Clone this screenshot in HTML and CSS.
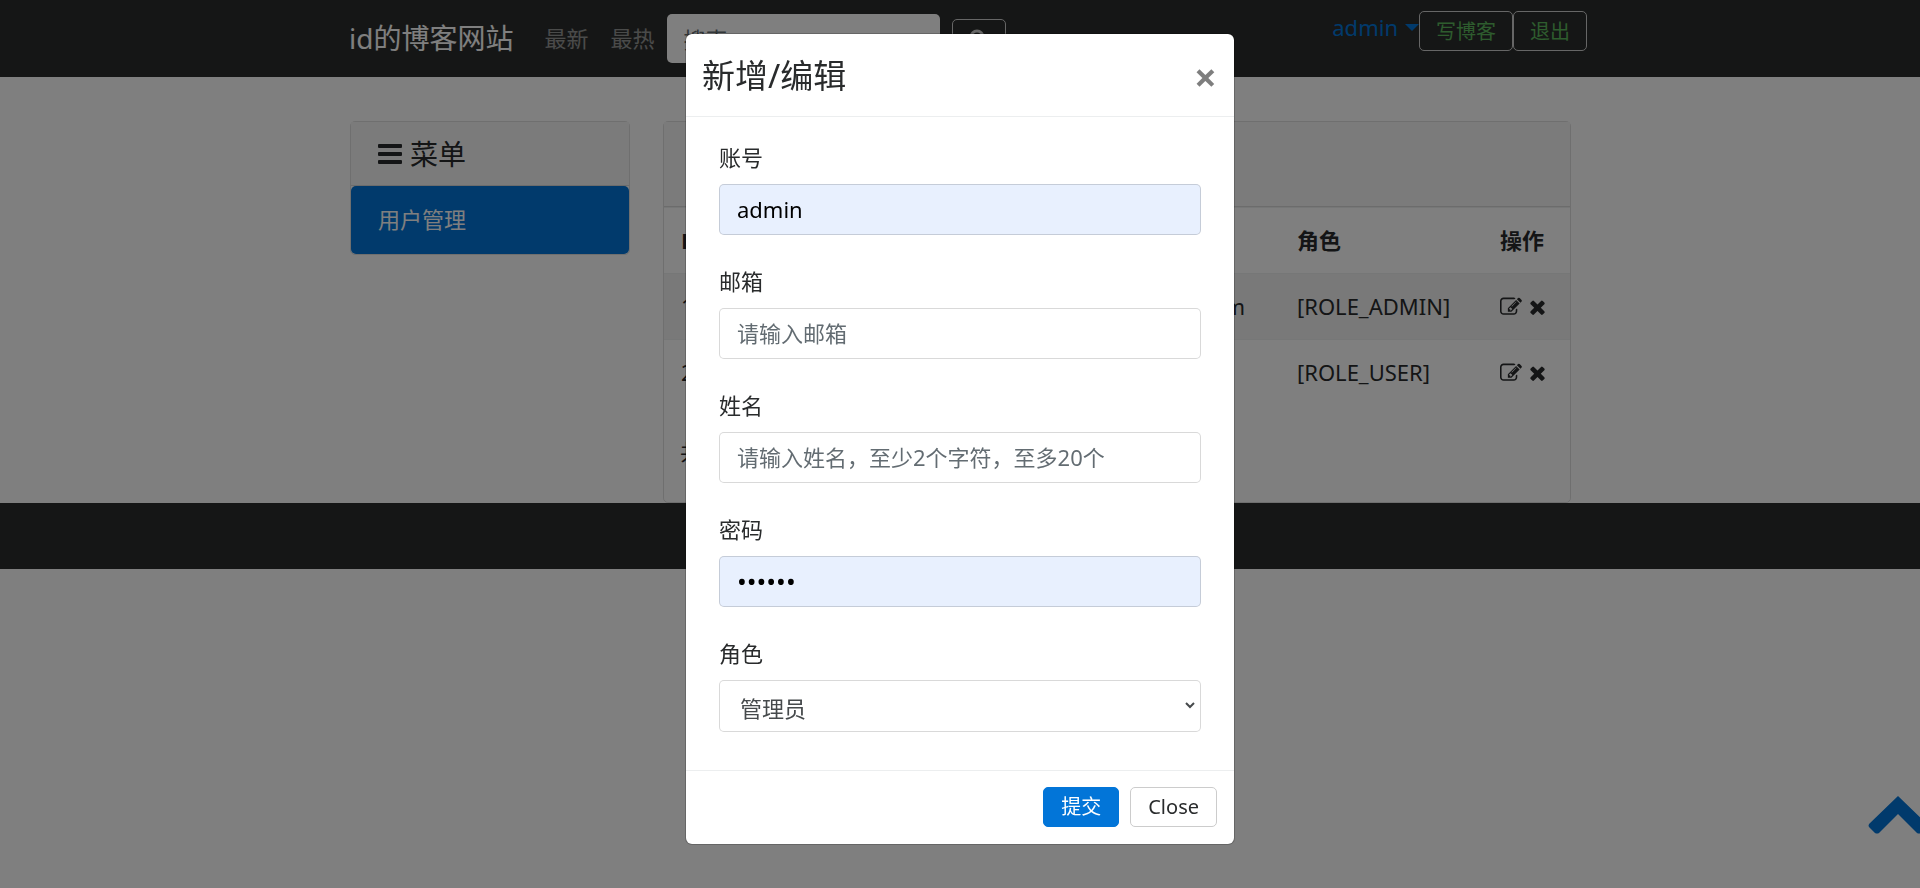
FILE: index.html
```html
<!DOCTYPE html>
<html lang="zh-CN">
<head>
<meta charset="utf-8">
<title>id的博客网站</title>
<link rel="stylesheet" href="styles.css">
</head>
<body>
<svg class="sprite" aria-hidden="true">
  <symbol id="edit" viewBox="0 0 1792 1792"><path d="M888 1184l116-116-152-152-116 116v56h96v96h56zm440-720q-16-16-33 1l-350 350q-17 17-1 33t33-1l350-350q17-17 1-33zm80 594v190q0 119-84.500 203.500t-203.500 84.500h-832q-119 0-203.500-84.500t-84.500-203.500v-832q0-119 84.500-203.500t203.500-84.500h832q63 0 117 25 15 7 18 23 3 17-9 29l-49 49q-14 14-32 8-23-6-45-6h-832q-66 0-113 47t-47 113v832q0 66 47 113t113 47h832q66 0 113-47t47-113v-126q0-13 9-22l64-64q15-15 35-7t20 29zm-96-738l288 288-672 672h-288v-288zm444 132l-92 92-288-288 92-92q28-28 68-28t68 28l152 152q28 28 28 68t-28 68z"/></symbol>
  <symbol id="remove" viewBox="0 0 1408 1792"><path d="M1298 1322q0 40-28 68l-136 136q-28 28-68 28t-68-28l-294-294-294 294q-28 28-68 28t-68-28l-136-136q-28-28-28-68t28-68l294-294-294-294q-28-28-28-68t28-68l136-136q28-28 68-28t68 28l294 294 294-294q28-28 68-28t68 28l136 136q28 28 28 68t-28 68l-294 294 294 294q28 28 28 68z"/></symbol>
</svg>

<nav class="navbar">
  <div class="container navbar-inner">
    <a class="brand" href="#">id的博客网站</a>
    <a class="nav-link" href="#">最新</a>
    <a class="nav-link" href="#">最热</a>
    <form class="search">
      <input class="search-input" type="text" placeholder="搜索" aria-label="搜索">
      <button class="btn btn-search" type="button" aria-label="搜索"><svg class="icon-search" viewBox="0 0 20 20"><circle cx="8" cy="8" r="6"/><path d="M12.500 12.500L18 18"/></svg></button>
    </form>
    <div class="account">
      <a class="user" href="#">admin<span class="caret"></span></a>
      <button class="btn btn-nav" type="button">写博客</button>
      <button class="btn btn-nav" type="button">退出</button>
    </div>
  </div>
</nav>

<main class="container content">
  <aside class="card menu">
    <h2 class="menu-title"><svg class="icon-bars" viewBox="0 0 24 20"><path d="M0 1q0-1 1-1h22q1 0 1 1v2q0 1-1 1H1q-1 0-1-1zM0 9q0-1 1-1h22q1 0 1 1v2q0 1-1 1H1q-1 0-1-1zM0 17q0-1 1-1h22q1 0 1 1v2q0 1-1 1H1q-1 0-1-1z"/></svg>菜单</h2>
    <a class="menu-item" href="#">用户管理</a>
  </aside>
  <section class="card users">
    <div class="card-head"></div>
    <table class="table">
      <thead>
        <tr><th>ID</th><th class="col-role">角色</th><th class="col-action">操作</th></tr>
      </thead>
      <tbody>
        <tr><td><div class="cell"><span>1</span><span>m</span></div></td><td>[ROLE_ADMIN]</td><td><div class="actions"><a href="#" aria-label="编辑"><svg class="icon-edit"><use href="#edit"/></svg></a><a href="#" aria-label="删除"><svg class="icon-remove"><use href="#remove"/></svg></a></div></td></tr>
        <tr><td>2</td><td>[ROLE_USER]</td><td><div class="actions"><a href="#" aria-label="编辑"><svg class="icon-edit"><use href="#edit"/></svg></a><a href="#" aria-label="删除"><svg class="icon-remove"><use href="#remove"/></svg></a></div></td></tr>
      </tbody>
    </table>
    <p class="total">共</p>
  </section>
</main>
<footer class="footer"></footer>
<a class="to-top" href="#" aria-label="Top"><svg class="icon-top" viewBox="0 0 60 38"><path d="M30 0L59 28q1 2 0 3l-6 6q-2 1-4 0L30 18 11 37q-2 1-4 0l-6-6q-1-1 0-3z"/></svg></a>

<div class="backdrop">
  <form class="modal" role="dialog" aria-labelledby="modal-title">
    <header class="modal-head">
      <h1 class="modal-title" id="modal-title">新增/编辑</h1>
      <button class="close" type="button" aria-label="关闭">×</button>
    </header>
    <div class="modal-body">
      <div class="field"><label for="account">账号</label><input class="control filled" id="account" type="text" value="admin"></div>
      <div class="field"><label for="email">邮箱</label><input class="control" id="email" type="text" placeholder="请输入邮箱"></div>
      <div class="field"><label for="name">姓名</label><input class="control" id="name" type="text" placeholder="请输入姓名，至少2个字符，至多20个"></div>
      <div class="field"><label for="password">密码</label><input class="control filled password" id="password" type="password" value="123456"></div>
      <div class="field"><label for="role">角色</label>
        <div class="select-wrap"><select class="control select" id="role"><option>管理员</option></select><svg class="icon-down" viewBox="0 0 10 7"><path d="M1 1l4 4 4-4"/></svg></div>
      </div>
    </div>
    <footer class="modal-foot">
      <button class="btn btn-primary" type="button">提交</button>
      <button class="btn btn-light" type="button">Close</button>
    </footer>
  </form>
</div>
</body>
</html>
```
FILE: styles.css
```css
* { box-sizing: border-box; }
html { min-height: 100%; }
body {
  margin: 0;
  overflow: hidden;
  background: #fff;
  color: #292b2c;
  font: 22px/33px "Noto Sans", "Noto Sans CJK SC", sans-serif;
}
h1, h2, p { margin: 0; font-weight: 400; }
a { color: inherit; text-decoration: none; }
input, button, select { font: inherit; color: inherit; }
input::placeholder { color: #636c72; opacity: 1; }
svg { display: block; fill: currentColor; }
.sprite { position: absolute; width: 0; height: 0; }

.container { max-width: 1254px; margin: 0 auto; padding: 0 16px 0 17px; }

.navbar { background: #2b2d2c; color: #fff; }
.navbar-inner { display: flex; align-items: center; height: 77px; padding: 0 0 0 16px; }
.brand { margin-right: 31px; font-size: 28px; }
.nav-link { margin-right: 22px; color: rgba(255, 255, 255, .5); }
.nav-link + .search { margin-left: -9px; }
.search { display: flex; align-items: center; gap: 12px; }
.search-input { width: 273px; height: 49px; padding: 0 16px; border: 0; border-radius: 5px; background: #fff; }
.btn { height: 40px; padding: 0 16px; border: 1px solid #ccc; border-radius: 5px; background: none; font-size: 20px; line-height: 30px; white-space: nowrap; }
.btn-search { width: 54px; color: #ccc; }
.icon-search { width: 20px; height: 20px; fill: none; stroke: currentColor; stroke-width: 3; }
.account { display: flex; align-items: flex-start; align-self: flex-start; margin-left: auto; padding-top: 11px; }
.user { display: flex; align-items: center; gap: 7px; color: #0275d8; line-height: 32px; }
.caret { border: 7px solid transparent; border-top-color: currentColor; border-bottom: 0; }
.btn-nav { padding-top: 2px; color: #5cb85c; }

.content { display: flex; align-items: flex-start; gap: 33px; padding-top: 44px; }
.card { border: 1px solid rgba(0, 0, 0, .125); border-radius: 5px; }
.menu { flex: 0 0 280px; }
.menu-title { display: flex; align-items: center; gap: 8px; height: 64px; padding: 1px 27px 0; border-bottom: 1px solid rgba(0, 0, 0, .125); background: #f7f7f7; font-size: 28px; }
.icon-bars { width: 24px; height: 20px; }
.menu-item { display: block; padding: 17px 27px 18px; border-radius: 5px; background: #0275d8; color: #fff; }
.users { flex: 1; }
.card-head { height: 85px; border-bottom: 1px solid rgba(0, 0, 0, .125); background: #f7f7f7; }
.table { width: 100%; border-collapse: collapse; table-layout: fixed; }
.table th, .table td { padding: 16px 17px; border-top: 1px solid #eceeef; text-align: left; }
.table th { font-family: "Open Sans", "Noto Sans CJK SC", sans-serif; font-weight: 700; }
.table tbody tr:first-child { background: rgba(0, 0, 0, .05); }
.col-role { width: 203px; }
.col-action { width: 87px; }
.cell { display: flex; justify-content: space-between; padding-right: 18px; }
.table .col-action, .table td:last-child { padding-right: 0; }
.actions { display: flex; align-items: center; gap: 7px; }
.icon-edit { width: 22px; height: 22px; }
.icon-remove { width: 17px; height: 22px; }
.total { padding: 30px 16px 34px; }
.footer { height: 66px; background: #2b2d2c; }
.to-top { position: fixed; right: -8px; bottom: 54px; color: #0275d8; }
.icon-top { width: 60px; height: 38px; }

.backdrop { position: fixed; inset: 0; padding-top: 33px; background: rgba(0, 0, 0, .5); }
.modal { max-width: 550px; margin: 0 auto; border: 1px solid rgba(0, 0, 0, .2); border-radius: 7px; background: #fff; background-clip: padding-box; }
.modal-head { display: flex; align-items: center; justify-content: space-between; padding: 17px 16px 15px; border-bottom: 1px solid #eceeef; }
.modal-title { font-size: 33px; line-height: 50px; }
.close { padding: 0 1px; border: 0; background: none; color: #000; font-size: 40px; font-weight: 700; line-height: 33px; opacity: .5; }
.modal-body { display: grid; gap: 30px; padding: 24px 33px 38px; }
.field { display: grid; gap: 10px; }
.control { display: block; width: 100%; height: 51px; padding: 0 16px 1px 17px; border: 1px solid rgba(0, 0, 0, .15); border-radius: 5px; background: #fff; color: #464a4c; }
.filled { background: #e8f0fe; color: #000; }
.password { font-size: 26px; }
.select-wrap { position: relative; }
.select { height: 52px; padding: 4px 20px 0; appearance: none; }
.icon-down { position: absolute; right: 6px; top: 22px; width: 10px; height: 7px; fill: none; stroke: #464a4c; stroke-width: 2; pointer-events: none; }
.modal-foot { display: flex; justify-content: flex-end; gap: 11px; padding: 16px 17px 17px; border-top: 1px solid #eceeef; }
.modal-foot .btn { padding: 0 17px; }
.modal-foot .btn-primary { border-color: #0275d8; background: #0275d8; color: #fff; }
.btn-light { background: #fff; }
```
